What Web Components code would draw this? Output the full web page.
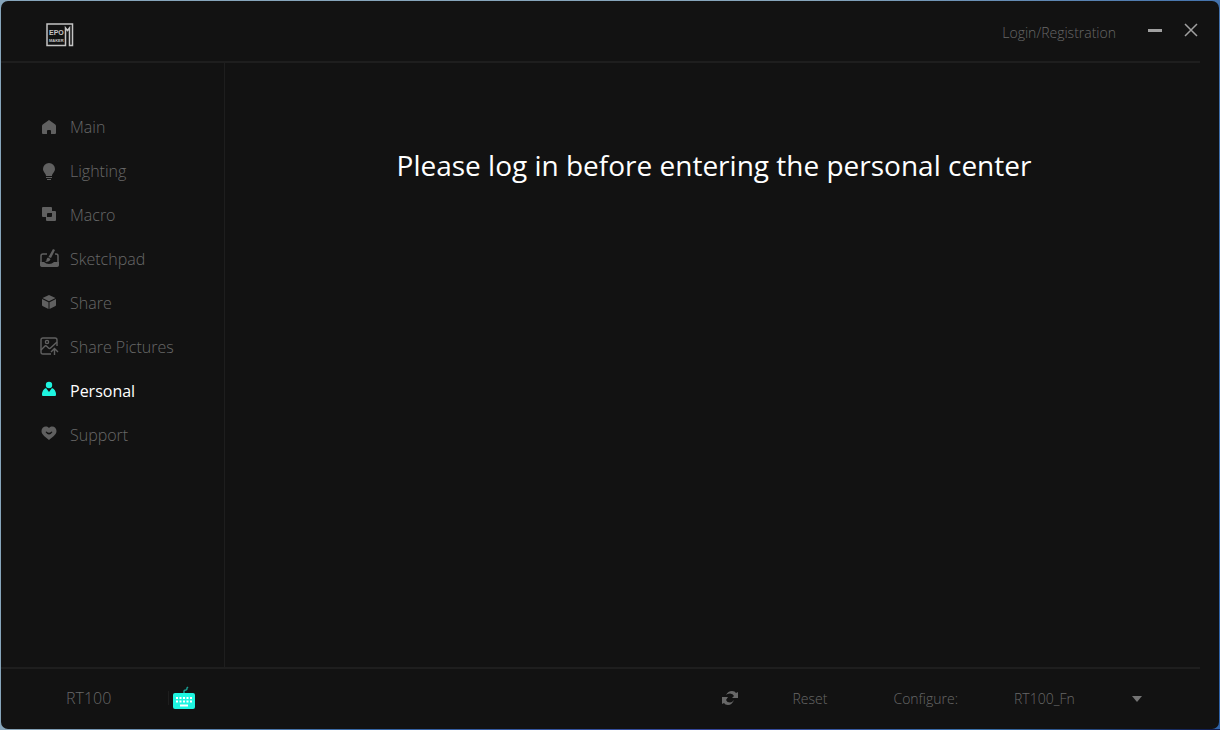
<!DOCTYPE html>
<html lang="en">
<head>
<meta charset="utf-8">
<title>EPOMAKER RT100</title>
<style>
  body {
    margin: 0;
    background: linear-gradient(100deg, #86a5bb 0%, #86a5bb 60%, #2e62a8 100%);
    font-family: "Open Sans", "Noto Sans", sans-serif;
    --bg: #121212;
    --line: #1e1e1e;
    --muted: #686868;
    --accent: #1ef5e0;
  }
</style>
</head>
<body>
<app-window>
  <title-bar slot="header"></title-bar>
  <side-nav slot="nav">
    <nav-item icon="home">Main</nav-item>
    <nav-item icon="bulb">Lighting</nav-item>
    <nav-item icon="macro">Macro</nav-item>
    <nav-item icon="sketch">Sketchpad</nav-item>
    <nav-item icon="cube">Share</nav-item>
    <nav-item icon="picture">Share Pictures</nav-item>
    <nav-item icon="person" active>Personal</nav-item>
    <nav-item icon="heart">Support</nav-item>
  </side-nav>
  <page-message>Please log in before entering the personal center</page-message>
  <status-bar slot="footer" device="RT100"></status-bar>
</app-window>

<script>
const icons = {
  home: '<path d="M10 3 L16.300 7.500 Q17 8 17 9 V16 Q17 17 16 17 H12 V14 Q12 13 11 13 H9 Q8 13 8 14 V17 H4 Q3 17 3 16 V9 Q3 8 3.700 7.500 Z"/>',
  bulb: '<path d="M10 2 A6 6 0 0 1 16 8 C16 11 13 12.500 13 15 H7 C7 12.500 4 11 4 8 A6 6 0 0 1 10 2 Z M7 16 H13 V17 H7 Z M8 18 H12 V19 H8 Z"/>',
  macro: '<path fill-rule="evenodd" d="M4 2 H12 Q13 2 13 3 V6 H16 Q17 6 17 7 V15 Q17 16 16 16 H8 Q7 16 7 15 V12 H4 Q3 12 3 11 V3 Q3 2 4 2 Z M9 8 Q8 8 8 9 V12 H12 Q13 12 13 11 V8 Z"/>',
  sketch: '<path d="M8 5 H4 Q2 5 2 7 V15 Q2 17 4 17 H17 Q19 17 19 15 V7 Q19 5 17 5 H16" fill="none" stroke="currentColor" stroke-width="1.500"/><path d="M1 13 H5 Q7 15 10 15 T15 13 H20 V16 Q20 18 18 18 H3 Q1 18 1 16 Z M14 0 L16 1 L12 9 L9.500 8 Z M9 8.500 L11.500 10 Q11 13 6 13 Q8 12 7.500 10.500 Q8 9 9 8.500 Z"/>',
  cube: '<path d="M10 2 L16.500 5 L10 8.300 L3.500 5 Z M3 6 L9.500 9.200 V16 L3.500 13 Q3 12.700 3 12 Z M17 6 L10.500 9.200 V16 L16.500 13 Q17 12.700 17 12 Z"/>',
  picture: '<g fill="none" stroke="currentColor" stroke-width="1.400"><path d="M12 17 H4 Q2 17 2 15 V3 Q2 1 4 1 H16 Q18 1 18 3 V9"/><circle cx="8" cy="5" r="1.600"/><path d="M2 13 L6 9 Q7 8.500 8 9.500 L9.500 11 Q10.500 12 11.500 11 L18 5 M15.500 18 V11 M12 15 L15.500 11.500 L19 15"/></g>',
  person: '<circle cx="10" cy="4" r="3.200"/><path d="M7 7 L10 11 L13 7 Q17 8.500 17 14 Q17 15 16 15 H4 Q3 15 3 14 Q3 8.500 7 7 Z"/>',
  heart: '<path fill-rule="evenodd" d="M10 3 C13 0 17.500 2 17.500 6 C17.500 10 13 12 10 15 C7 12 2.500 10 2.500 6 C2.500 2 7 0 10 3 Z M6.500 7 Q10 12 13.500 7 L12.500 6.500 Q10 9 7.500 6.500 Z"/>'
};

class AppWindow extends HTMLElement {
  constructor() {
    super();
    this.attachShadow({ mode: 'open' }).innerHTML = `
      <style>
        :host {
          display: grid;
          grid-template-rows: auto 1fr auto;
          box-sizing: border-box;
          min-height: 100vh;
          padding: 1px;
          background: linear-gradient(90deg, #8ba6b8 0%, #3566a5 30%, #34439a 60%, #3b72ac 80%, #101c50 100%) bottom / 100% 1px no-repeat;
        }
        header, .middle, footer { background: var(--bg); }
        header { border-radius: 7px 7px 0 0; }
        footer { border-radius: 0 0 7px 7px; }
        .middle {
          display: grid;
          grid-template-columns: 224px 1fr;
        }
        .rule {
          height: 2px;
          margin-right: 19px;
          background: var(--line);
        }
        aside { border-right: 1px solid var(--line); box-sizing: border-box; }
      </style>
      <header>
        <slot name="header"></slot>
        <div class="rule"></div>
      </header>
      <div class="middle">
        <aside><slot name="nav"></slot></aside>
        <main><slot></slot></main>
      </div>
      <footer>
        <div class="rule"></div>
        <slot name="footer"></slot>
      </footer>
    `;
  }
}

class BrandLogo extends HTMLElement {
  constructor() {
    super();
    this.attachShadow({ mode: 'open' }).innerHTML = `
      <style>
        :host { display: block; color: #c4c4c4; }
        svg { display: block; }
        text { font-family: "Liberation Sans Narrow", "Liberation Sans", sans-serif; font-weight: 700; fill: currentColor; }
      </style>
      <svg width="28" height="24" viewBox="0 0 28 24" role="img" aria-label="Epomaker">
        <path d="M1 1 H26.500 V22.500 H23.500 V5 L21.500 7.500 L19.500 5 V22.500 H1 Z" fill="none" stroke="currentColor" stroke-width="1.500"/>
        <text x="3" y="12" font-size="7">EPO</text>
        <text x="3" y="19" font-size="4">MAKER</text>
      </svg>
    `;
  }
}

class TitleBar extends HTMLElement {
  constructor() {
    super();
    this.attachShadow({ mode: 'open' }).innerHTML = `
      <style>
        :host {
          display: flex;
          align-items: center;
          justify-content: space-between;
          height: 60px;
          padding: 0 21px 0 45px;
        }
        brand-logo { padding-top: 8px; }
        .actions { display: flex; align-items: center; }
        a {
          margin-right: 32px;
          padding-top: 4px;
          font-size: 14px;
          font-weight: 300;
          line-height: 20px;
          color: var(--muted);
          text-decoration: none;
        }
        button {
          display: block;
          padding: 0 0 2px;
          border: 0;
          background: none;
          color: #a0a0a0;
        }
        button + button { margin-left: 22px; }
        svg { display: block; }
      </style>
      <brand-logo></brand-logo>
      <div class="actions">
        <a href="#login">Login/Registration</a>
        <button type="button" aria-label="Minimize">
          <svg width="14" height="14"><path d="M0 6 H14 V9 H0 Z" fill="currentColor"/></svg>
        </button>
        <button type="button" aria-label="Close">
          <svg width="14" height="14"><path d="M1 1 L13 13 M13 1 L1 13" stroke="currentColor" stroke-width="1.500"/></svg>
        </button>
      </div>
    `;
  }
}

class SideNav extends HTMLElement {
  constructor() {
    super();
    this.attachShadow({ mode: 'open' }).innerHTML = `
      <style>
        :host { display: block; padding: 42px 0 24px; }
        nav { display: flex; flex-direction: column; }
      </style>
      <nav><slot></slot></nav>
    `;
  }
}

class NavItem extends HTMLElement {
  constructor() {
    super();
    this.attachShadow({ mode: 'open' });
  }

  connectedCallback() {
    const active = this.hasAttribute('active');
    this.shadowRoot.innerHTML = `
      <style>
        :host { display: block; }
        a {
          display: flex;
          align-items: center;
          gap: 11px;
          height: 44px;
          padding-left: 38px;
          font-size: 16px;
          font-weight: ${active ? 400 : 300};
          line-height: 24px;
          color: ${active ? '#fff' : 'var(--muted)'};
          text-decoration: none;
        }
        svg {
          flex: none;
          color: ${active ? 'var(--accent)' : '#606060'};
          fill: currentColor;
        }
      </style>
      <a href="#${this.getAttribute('icon')}" ${active ? 'aria-current="page"' : ''}>
        <svg width="20" height="20" viewBox="0 0 20 20" aria-hidden="true">${icons[this.getAttribute('icon')]}</svg>
        <slot></slot>
      </a>
    `;
  }
}

class PageMessage extends HTMLElement {
  constructor() {
    super();
    this.attachShadow({ mode: 'open' }).innerHTML = `
      <style>
        :host { display: block; padding: 82px 16px 0 0; }
        h1 {
          margin: 0;
          font-size: 28px;
          font-weight: 400;
          line-height: 40px;
          text-align: center;
          color: #fff;
        }
      </style>
      <h1><slot></slot></h1>
    `;
  }
}

class StatusBar extends HTMLElement {
  constructor() {
    super();
    this.attachShadow({ mode: 'open' });
  }

  connectedCallback() {
    const device = this.getAttribute('device');
    this.shadowRoot.innerHTML = `
      <style>
        :host {
          display: flex;
          align-items: center;
          justify-content: space-between;
          height: 60px;
          padding: 0 77px 0 65px;
          font-size: 14px;
          font-weight: 300;
          line-height: 20px;
          color: var(--muted);
        }
        .device, .tools { display: flex; align-items: center; }
        .device { padding-bottom: 2px; }
        .name { width: 102px; font-size: 16px; }
        .keyboard { padding-left: 4px; border-left: 1px solid var(--line); height: 14px; display: flex; align-items: center; }
        button, select {
          padding: 0;
          border: 0;
          background: none;
          font: inherit;
          color: inherit;
        }
        svg { display: block; flex: none; }
        .reset { margin: 0 66px 0 54px; }
        label { margin-right: 56px; }
        .picker { display: grid; grid-template-columns: 128px; align-items: center; }
        select { grid-area: 1 / 1; appearance: none; width: 100%; }
        .picker svg { grid-area: 1 / 1; justify-self: end; pointer-events: none; }
      </style>
      <div class="device">
        <span class="name">${device}</span>
        <span class="keyboard">
          <svg width="22" height="24" viewBox="0 0 22 24" role="img" aria-label="Keyboard connected">
            <path d="M11 7 V5 Q11 4 13 4 Q14 4 14 2 L15 1" fill="none" stroke="#1a9d92" stroke-width="1.500"/>
            <rect y="7" width="22" height="16" rx="2" fill="#1ef5e0"/>
            <path d="M3 12 H19 M3 15.500 H19" stroke="#fff" stroke-width="2" stroke-dasharray="2 1.500"/>
            <path d="M7 19.500 H15" stroke="#fff" stroke-width="2"/>
          </svg>
        </span>
      </div>
      <div class="tools">
        <button type="button" aria-label="Refresh">
          <svg width="18" height="18" viewBox="0 0 18 18" fill="#686868">
            <path d="M5 5 Q7 1 11 1 Q14 1 15 3 L17 2 V8 H11 L13 6 Q12 3.500 9 3.500 Q6 3.500 5 5 Z"/>
            <path d="M13 10 Q11 15 7 15 Q4 15 3 13 L1 14 V7 H7 L5 10 Q6 12.500 9 12.500 Q11 12.500 13 10 Z"/>
          </svg>
        </button>
        <button class="reset" type="button">Reset</button>
        <label for="config">Configure:</label>
        <span class="picker">
          <select id="config"><option>${device}_Fn</option></select>
          <svg width="10" height="6"><path d="M0 0 H10 L5 6 Z" fill="#747474"/></svg>
        </span>
      </div>
    `;
  }
}

customElements.define('brand-logo', BrandLogo);
customElements.define('app-window', AppWindow);
customElements.define('title-bar', TitleBar);
customElements.define('side-nav', SideNav);
customElements.define('nav-item', NavItem);
customElements.define('page-message', PageMessage);
customElements.define('status-bar', StatusBar);
</script>
</body>
</html>
